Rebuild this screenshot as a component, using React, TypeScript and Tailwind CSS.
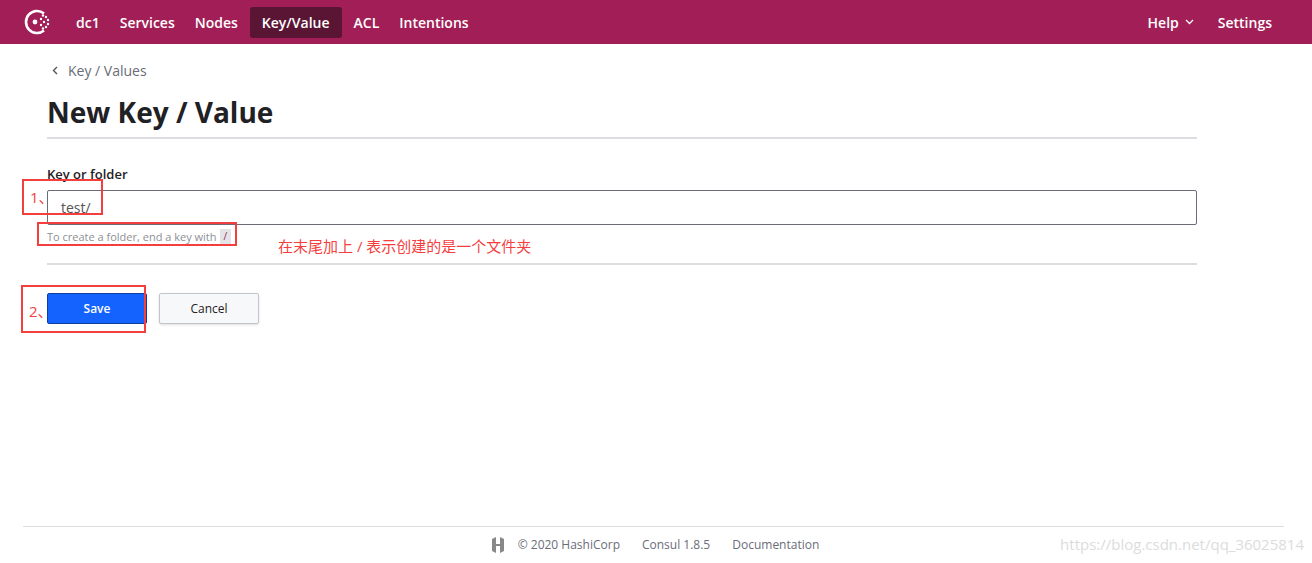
import React from "react";

export default function App() {
  const f = { fontFamily: '"Open Sans", "Noto Sans", "Noto Sans CJK SC", sans-serif' };
  return (
    <div className="w-[1312px] h-[563px] bg-white relative overflow-hidden flex flex-col" style={f}>
      <header className="h-[44px] bg-[#a11f56] flex items-center pl-[22px] pr-[40px] text-white text-[14px] font-semibold shrink-0">
        <svg width="32" height="32" viewBox="0 0 32 32" className="mr-[14px]">
          <path d="M22 7.5 A11 11 0 1 0 22 24.5" fill="none" stroke="white" strokeWidth="2.6" />
          <circle cx="13" cy="16" r="2.4" fill="white" />
          {[[19,13],[19,19],[22,16],[24,11],[24,21],[26,14],[26,18],[21,9.5],[21,22.5]].map(([x,y],i)=>(
            <circle key={i} cx={x} cy={y} r="1.2" fill="white" />
          ))}
        </svg>
        <nav className="flex items-center gap-[4px]">
          <span className="px-[8px] py-[5px]">dc1</span>
          <span className="px-[8px] py-[5px]">Services</span>
          <span className="px-[8px] py-[5px]">Nodes</span>
          <span className="px-[12px] py-[5px] bg-[#5a1434] rounded-[3px]">Key/Value</span>
          <span className="px-[8px] py-[5px]">ACL</span>
          <span className="px-[8px] py-[5px]">Intentions</span>
        </nav>
        <div className="ml-auto flex items-center gap-[24px]">
          <span className="flex items-center gap-[6px]">Help
            <svg width="9" height="6" viewBox="0 0 9 6"><path d="M1 1l3.5 3.5L8 1" stroke="white" strokeWidth="1.3" fill="none" /></svg>
          </span>
          <span>Settings</span>
        </div>
      </header>
      <main className="pl-[47px] w-[1197px] flex-1">
        <div className="flex items-center gap-[10px] mt-[16px] text-[14px] text-[#6a6d77]">
          <svg width="6" height="9" viewBox="0 0 6 9" className="ml-[5px]"><path d="M5 1L1.5 4.5 5 8" stroke="#555" strokeWidth="1.4" fill="none" /></svg>
          <span>Key / Values</span>
        </div>
        <h1 className="text-[28px] font-bold text-[#1f2124] mt-[13px] leading-[36px] pb-[7px] border-b-2 border-[#dcdde1]">New Key / Value</h1>
        <div className="mt-[26px] text-[13px] font-semibold text-[#1f2124]">Key or folder</div>
        <div className="mt-[5px] h-[35px] border border-[#6a6d77] rounded-[2px] flex items-center pl-[13px] text-[14px] text-[#555]">test/</div>
        <div className="mt-[4px] text-[11px] text-[#8e9097] flex items-center gap-[3px] pb-[18px] border-b-2 border-[#dcdde1]">
          To create a folder, end a key with <span className="bg-[#e3e4e8] text-[#a11f56] px-[4px] text-[10px]">/</span>
        </div>
        <div className="mt-[28px] flex gap-[12px]">
          <button className="w-[100px] h-[31px] bg-[#1563ff] border border-[#0e3f9e] rounded-[2px] text-white text-[12px] font-semibold">Save</button>
          <button className="w-[100px] h-[31px] bg-[#f7f8fa] border border-[#c2c5cb] rounded-[2px] text-[#1f2124] text-[12px] shadow-sm">Cancel</button>
        </div>
      </main>
      <footer className="mx-[23px] w-[1261px] border-t border-[#dcdde1] h-[37px] flex items-center justify-center gap-[22px] text-[12px] text-[#6a6d77] shrink-0">
        <span className="flex items-center gap-[10px]">
          <svg width="20" height="20" viewBox="0 0 20 20"><path d="M4 4l4-2v16l-4-2z M16 4l-4-2v16l4-2z M8 9h4v2H8z" fill="#888" /></svg>
          © 2020 HashiCorp
        </span>
        <span>Consul 1.8.5</span>
        <span>Documentation</span>
      </footer>
      <span className="absolute right-[8px] bottom-[8px] text-[15px] text-[#dcdcdc]">https://blog.csdn.net/qq_36025814</span>
      {/* annotations */}
      <div className="absolute left-[22px] top-[179px] w-[81px] h-[36px] border-2 border-[#f43f3f]" />
      <span className="absolute left-[30px] top-[186px] text-[15px] text-[#f43f3f]">1、</span>
      <div className="absolute left-[37px] top-[222px] w-[200px] h-[24px] border-2 border-[#f43f3f]" />
      <div className="absolute left-[21px] top-[285px] w-[125px] h-[48px] border-2 border-[#f43f3f]" />
      <span className="absolute left-[29px] top-[300px] text-[15px] text-[#f43f3f]">2、</span>
      <span className="absolute left-[278px] top-[235px] text-[15px] text-[#f43f3f]">在末尾加上 / 表示创建的是一个文件夹</span>
    </div>
  );
}
